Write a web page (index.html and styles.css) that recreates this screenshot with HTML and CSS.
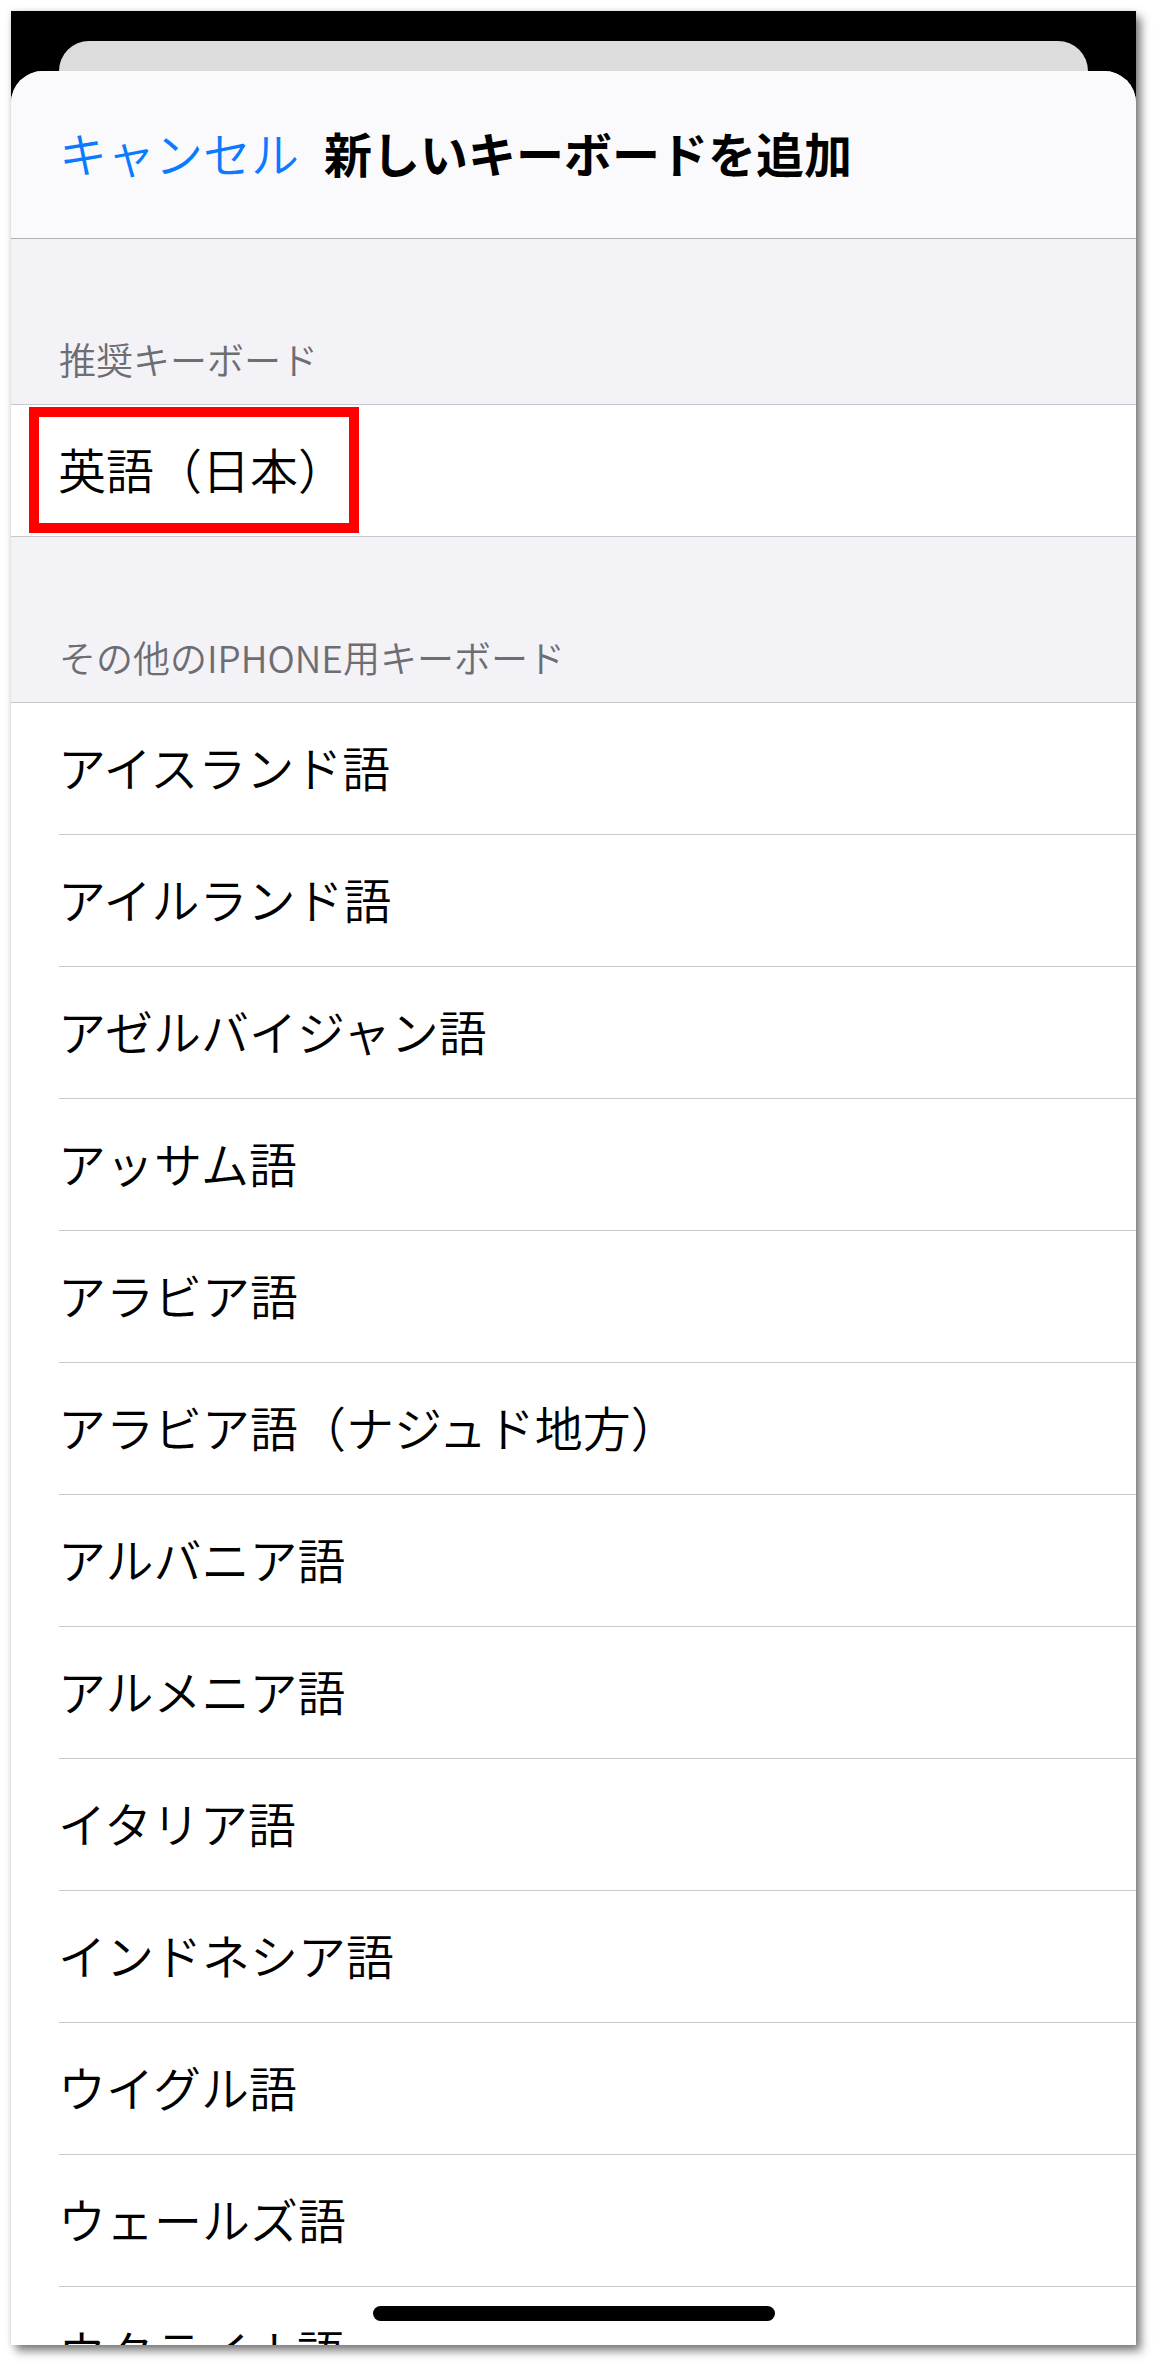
FILE: index.html
```html
<!DOCTYPE html>
<html lang="ja">
<head>
<meta charset="utf-8">
<title>新しいキーボードを追加</title>
<link rel="stylesheet" href="styles.css">
</head>
<body>
<div class="screen">
  <div class="backcard"></div>
  <div class="sheet">
    <header class="navbar">
      <span class="nav-cancel">キャンセル</span>
      <span class="nav-title">新しいキーボードを追加</span>
    </header>

    <div class="section-header"><span>推奨キーボード</span></div>
    <div class="group">
      <div class="row row-single">
        <span class="row-label">英語（日本）</span>
        <span class="highlight"></span>
      </div>
    </div>

    <div class="section-header"><span>その他のIPHONE用キーボード</span></div>
    <div class="group">
      <div class="row"><span class="row-label">アイスランド語</span></div>
      <div class="row"><span class="row-label">アイルランド語</span></div>
      <div class="row"><span class="row-label">アゼルバイジャン語</span></div>
      <div class="row"><span class="row-label">アッサム語</span></div>
      <div class="row"><span class="row-label">アラビア語</span></div>
      <div class="row"><span class="row-label">アラビア語（ナジュド地方）</span></div>
      <div class="row"><span class="row-label">アルバニア語</span></div>
      <div class="row"><span class="row-label">アルメニア語</span></div>
      <div class="row"><span class="row-label">イタリア語</span></div>
      <div class="row"><span class="row-label">インドネシア語</span></div>
      <div class="row"><span class="row-label">ウイグル語</span></div>
      <div class="row"><span class="row-label">ウェールズ語</span></div>
      <div class="row"><span class="row-label">ウクライナ語</span></div>
    </div>
  </div>
  <div class="home-indicator"></div>
</div>
</body>
</html>
```

FILE: styles.css
```css
html, body {
  margin: 0;
  padding: 0;
  background: #ffffff;
}

body {
  width: 1155px;
  height: 2364px;
  overflow: hidden;
  font-family: "Noto Sans CJK JP", "Noto Sans", sans-serif;
}

.screen {
  position: relative;
  margin: 11px 0 0 11px;
  width: 1125px;
  height: 2334px;
  overflow: hidden;
  background: #000000;
  box-shadow: 5px 6px 9px rgba(0, 0, 0, 0.5), 0 0 5px rgba(0, 0, 0, 0.12);
}

.backcard {
  margin: 30px 48px 0 48px;
  height: 30px;
  background: #dcdcdd;
  border-radius: 30px 30px 0 0;
}

.sheet {
  background: #f2f2f7;
  border-radius: 32px 32px 0 0;
  overflow: hidden;
}

.navbar {
  height: 168px;
  box-sizing: border-box;
  display: flex;
  align-items: center;
  gap: 25px;
  padding: 0 0 5px 48px;
  background: #fafafc;
  border-bottom: 1px solid #b1b1b4;
}

.nav-cancel {
  font-size: 48px;
  line-height: 48px;
  font-weight: 350;
  color: #0a7aff;
}

.nav-title {
  font-size: 48px;
  line-height: 48px;
  font-weight: 700;
  color: #000000;
}

.section-header {
  height: 166px;
  box-sizing: border-box;
  display: flex;
  align-items: flex-end;
  padding: 0 0 26px 48px;
  border-bottom: 1px solid #c8c7cc;
}

.section-header span {
  font-size: 37px;
  line-height: 37px;
  font-weight: 350;
  color: #6d6d72;
}

.group {
  background: #ffffff;
}

.row {
  position: relative;
  height: 132px;
  box-sizing: border-box;
  display: flex;
  align-items: center;
  padding: 0 0 6px 47px;
}

.row::after {
  content: "";
  position: absolute;
  left: 48px;
  right: 0;
  bottom: 0;
  height: 1px;
  background: #c8c7cc;
}

.row-single::after {
  left: 0;
}

.row-label {
  font-size: 48px;
  line-height: 48px;
  font-weight: 350;
  color: #000000;
}

.highlight {
  position: absolute;
  left: 18px;
  top: 2px;
  width: 330px;
  height: 126px;
  box-sizing: border-box;
  border: 10px solid #ff0000;
}

.home-indicator {
  position: absolute;
  left: 362px;
  bottom: 24px;
  width: 402px;
  height: 15px;
  border-radius: 8px;
  background: #000000;
}
```
